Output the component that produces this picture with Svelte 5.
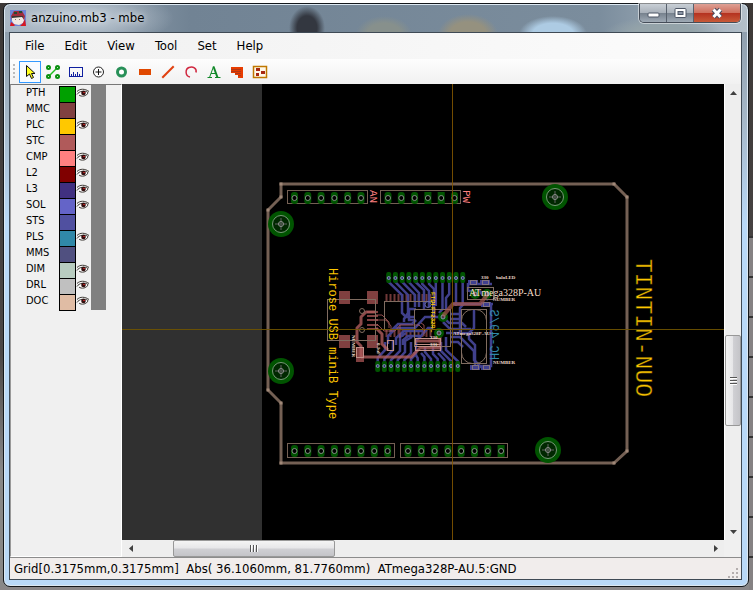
<script lang="ts">
	interface Layer {
		name: string;
		color: string;
		visible: boolean;
	}

	let layers = $state<Layer[]>([
		{ name: 'PTH', color: '#00a000', visible: true },
		{ name: 'MMC', color: '#804040', visible: false },
		{ name: 'PLC', color: '#ffc800', visible: true },
		{ name: 'STC', color: '#b05a5a', visible: false },
		{ name: 'CMP', color: '#ff8080', visible: true },
		{ name: 'L2', color: '#800000', visible: true },
		{ name: 'L3', color: '#403080', visible: true },
		{ name: 'SOL', color: '#6464c8', visible: true },
		{ name: 'STS', color: '#5050a0', visible: false },
		{ name: 'PLS', color: '#3088a8', visible: true },
		{ name: 'MMS', color: '#505080', visible: false },
		{ name: 'DIM', color: '#b8ccc0', visible: true },
		{ name: 'DRL', color: '#c0c0c0', visible: true },
		{ name: 'DOC', color: '#e0bca4', visible: true }
	]);

	const menus = ['File', 'Edit', 'View', 'Tool', 'Set', 'Help'];
	const tools = ['Select', 'Connect', 'Measure', 'Origin', 'Hole', 'Pad', 'Line', 'Arc', 'Text', 'Polygon', 'Component'];
	let activeTool = $state('Select');

	const status = 'Grid[0.3175mm,0.3175mm]  Abs( 36.1060mm, 81.7760mm)  ATmega328P-AU.5:GND';

	// board geometry
	const outline: [number, number][] = [
		[281, 184], [614, 184], [627, 197], [627, 451], [614, 463],
		[281, 463], [281, 403], [268, 390], [268, 210], [281, 197]
	];
	const holes = [[281, 224], [281, 371], [555, 197], [548, 450]];

	const row = (x: number, y: number, n: number, square: number[] = []) =>
		Array.from({ length: n }, (_, i) => ({ x: x + i * 13.3, y, square: square.includes(i) }));
	const pins = [
		...row(294.5, 198, 6),
		...row(388, 198, 6, [3, 4]),
		...row(294.5, 451, 8),
		...row(408, 451, 8, [7])
	];

	const topPads = Array.from({ length: 12 }, (_, i) => 388.7 + i * 6.73);
	const bottomPads = Array.from({ length: 13 }, (_, i) => 377.7 + i * 6.67);
	const chipPins = Array.from({ length: 12 }, (_, i) => 385.5 + i * 4);

	// solder side
	const blue = [
		'388.7,278 388.7,282 402,295 402,313 406,317 415,317',
		'395.4,278 395.4,282 408,295 408,313 404,319 404,322',
		'402.2,278 402.2,282 415,295 415,307',
		'408.9,278 408.9,282 419,293 419,307',
		'415.6,278 415.6,282 424,290 424,309',
		'422.3,278 422.3,284 429,291 429,307',
		'429.1,278 429.1,284 434,289 434,318',
		'435.8,278 435.8,306',
		'442.5,278 442.5,309 439,313',
		'449.2,278 449.2,294 446,298 446,310',
		'456,278 456,306',
		'462.7,278 462.7,305 460,308 460,333',
		'390,332 398,324 412,324 416,320',
		'388,344 388,336 396,328 415,328 425,317 441,317',
		'396,345 396,338 404,331 423,331',
		'403,345 403,340 408,336 421,336 428,328 432,328',
		'416,309 409,309 409,320 415,320',
		'443,317 449,323 462,323 466,327',
		'443,322 450,329 471,329',
		'446,333 472,333',
		'450,314 459,314',
		'450,319 459,319',
		'450,337 460,337 474,351 474,360 481,367 488,367',
		'450,342 458,342 463,347',
		'468,284 492,284',
		'468,283 468,292',
		'474,310 474,328 469,333 469,339 475,345 475,366',
		'491,304 491,366 481,366',
		'452,304 493,304',
		'469,291 479,291 488,300'
	];
	const fanOut = [
		'377.7,366 377.7,358 385,350 385,342',
		'384.4,366 384.4,359 393,350 393,340',
		'391,366 391,360 400,351 400,337 406,333',
		'397.7,366 397.7,360 405,352 405,341 412,337',
		'404.4,366 404.4,360 411,353 411,342',
		'411,366 411,359 416,354 416,340 421,337',
		'417.7,366 417.7,358 414,352',
		'424.4,366 424.4,357 421,353',
		'431,366 431,359 425,352 425,346',
		'437.7,366 437.7,359 433,354 433,347',
		'444.4,366 444.4,360 438,353',
		'451,366 451,361 441,351 441,342',
		'457.7,366 457.7,361 446,350 446,337'
	];

	// component side
	const red = [
		'376,312 366,312 361,317 361,324 357,328 357,342 361,346 361,358',
		'361,357 411,357 420,348 440,348 440,335',
		'376,328 382,334 382,344 388,350',
		'415,341 441,341'
	];
	const thinRed = [
		'376,315 382,315 389,322 389,328',
		'376,320 386,320 391,326 391,331',
		'377,324 384,331 395,331 400,325 419,325 425,331',
		'400,338 400,325',
		'424,336 424,325 421,323'
	];
</script>

<div class="desktop">
	<div class="window">
		<header class="titlebar">
			<svg class="app-icon" width="16" height="16" viewBox="0 0 16 16" aria-hidden="true">
				<rect width="16" height="16" fill="#6f86d8" />
				<path d="M1 6 4 1h8l3 5-1 4H2z" fill="#a02c3c" />
				<path d="M4 2h3v2H4zM9 1h3v2H9z" fill="#254a30" />
				<path d="M2 6h11v2H2z" fill="#3a3634" />
				<path d="m2 8 10-1 2 3-1 3-4 2-5-1-2-3z" fill="#f2e8e2" />
				<path d="M5 9h1v1H5zM9 9h1v1H9z" fill="#8c7070" />
				<path d="m1 12 4 3-1 1H0zM15 9l1 7h-6l3-3z" fill="#d81820" />
			</svg>
			<h1>anzuino.mb3 - mbe</h1>
			<div class="controls">
				<button aria-label="Minimize">
					<svg width="13" height="13"><rect x="1" y="6" width="11" height="4" rx="1" fill="#fff" stroke="#4d5666" /></svg>
				</button>
				<button aria-label="Maximize">
					<svg width="13" height="13">
						<rect x="1" y="1.500" width="11" height="9" rx="1" fill="#fff" stroke="#4d5666" />
						<rect x="4" y="4.500" width="5" height="3" fill="#8c96a6" stroke="#4d5666" />
					</svg>
				</button>
				<button class="close" aria-label="Close">
					<svg width="14" height="13">
						<path d="m3.500 2.500 7 7.500m0-7.500-7 7.500" stroke="#4b4d60" stroke-width="5" />
						<path d="m3.500 2.500 7 7.500m0-7.500-7 7.500" stroke="#fff" stroke-width="3" />
					</svg>
				</button>
			</div>
		</header>

		<div class="client">
			<nav class="menubar">
				{#each menus as menu}
					<button>{menu}</button>
				{/each}
			</nav>

			<div class="toolbar">
				<span class="grip"></span>
				{#each tools as tool}
					<button
						class:active={tool === activeTool}
						aria-label={tool}
						aria-pressed={tool === activeTool}
						onclick={() => (activeTool = tool)}
					>
						<svg width="16" height="16" viewBox="0 0 16 16">
							{#if tool === 'Select'}
								<path d="M4.500 1.500v11l3-2.500 2 4.500 2-1-2-4h3.500z" fill="#ffff20" stroke="#111" />
							{:else if tool === 'Connect'}
								<path d="M4 12 12 4" stroke="#20c020" stroke-width="1.500" />
								<g fill="#fff" stroke="#0a9010" stroke-width="2">
									<circle cx="3.500" cy="3.500" r="1.500" /><circle cx="12.500" cy="3.500" r="1.500" />
									<circle cx="3.500" cy="12.500" r="1.500" /><circle cx="12.500" cy="12.500" r="1.500" />
								</g>
							{:else if tool === 'Measure'}
								<path d="M1.500 3v10M14.500 3v10M1 3.500h14M1 12.500h14M3.500 10v2M5.500 8v4M7.500 10v2M9.500 8v4M11.500 10v2" stroke="#1020a0" fill="none" />
							{:else if tool === 'Origin'}
								<circle cx="7.500" cy="8" r="5" fill="#fff" stroke="#222" />
								<path d="M7.500 5v6M4.500 8h6" stroke="#111" />
							{:else if tool === 'Hole'}
								<circle cx="7.500" cy="8" r="4" fill="#fff" stroke="#289058" stroke-width="3" />
							{:else if tool === 'Pad'}
								<rect x="2" y="5" width="12" height="6" fill="#e04800" />
							{:else if tool === 'Line'}
								<path d="m3 13 10-10" stroke="#e04010" stroke-width="2" stroke-linecap="square" />
							{:else if tool === 'Arc'}
								<path d="M7 13C2 12 2 5 6 3.500c4-1.500 8 1 7 5" fill="none" stroke="#d02840" stroke-width="1.500" />
							{:else if tool === 'Text'}
								<path d="m3.500 13.500 4-11M5 9.500h6M1.500 13.500h4.500M9 13.500h5.500" fill="none" stroke="#108828" />
								<path d="m7.500 2.500 4 11" stroke="#108828" stroke-width="2" />
							{:else if tool === 'Polygon'}
								<path d="M2 3h12v11H9v-3H6V9H2z" fill="#e83c00" />
								<path d="M2 5.500h10M2 7.500h10M6 9.500h6M9 11.500h3" stroke="#b03818" />
							{:else}
								<rect x="1.500" y="2.500" width="13" height="11" fill="#fff8e8" stroke="#c07800" stroke-width="1.500" />
								<path d="M4 4h4v3H4zM4 9h3v3H4zM9 7h4v3H9z" fill="#a82810" />
							{/if}
						</svg>
					</button>
				{/each}
			</div>

			<main class="workspace">
				<aside class="layers">
					<ul>
						{#each layers as layer}
							<li>
								<span class="name">{layer.name}</span>
								<span class="swatch" style:background={layer.color}></span>
								<button
									class="eye"
									aria-label="Show {layer.name}"
									aria-pressed={layer.visible}
									onclick={() => (layer.visible = !layer.visible)}
								>
									{#if layer.visible}
										<svg width="14" height="10" viewBox="0 0 14 10">
											<path d="M1 3.500C4 .5 9 .5 13 3.500M1 6.500C3 3 9 2 12 4.500c-1 4-7 4.500-9 2.500" fill="#fff" stroke="#3a3632" />
											<circle cx="7.500" cy="5" r="2.300" fill="#300c0c" />
											<path d="M7 4h2v1H7z" fill="#b02020" />
										</svg>
									{/if}
								</button>
							</li>
						{/each}
					</ul>
				</aside>

				<div class="canvas">
					<svg width="100%" height="100%" role="img" aria-label="Board layout">
						<rect width="140" height="100%" fill="#303030" />
						<g transform="translate(-122 -84)">
							<!-- board outline -->
							<polygon points={outline.join(' ')} fill="none" stroke="#746054" stroke-width="3" />
							{#each outline as [x, y]}
								<rect x={x - 1.5} y={y - 1.5} width="3" height="3" fill="#a08878" />
							{/each}

							{#each holes as [x, y]}
								<g transform="translate({x} {y})" fill="none">
									<circle r="13" fill="#005400" />
									<circle r="8.500" fill="#002800" stroke="#789878" />
									<path d="M-6 0H6M0-6V6" stroke="#606060" />
									<circle r="2.500" stroke="#909090" />
								</g>
							{/each}

							<!-- headers -->
							<g fill="none" stroke="#746054">
								<rect x="287.500" y="190.500" width="80" height="13" />
								<rect x="380.500" y="190.500" width="80" height="13" />
								<rect x="287.500" y="443.500" width="107" height="14" />
								<rect x="400.500" y="443.500" width="107" height="14" />
							</g>
							{#each pins as pin}
								<rect x={pin.x - 3.5} y={pin.y - 6} width="7" height="12" rx={pin.square ? 0 : 3} fill="#005400" />
								<circle cx={pin.x} cy={pin.y} r="2.500" fill="#000" stroke="#809080" />
							{/each}

							<!-- usb connector and controller -->
							<g fill="#804040">
								<rect x="339" y="291" width="11" height="13" />
								<rect x="367" y="291" width="11" height="13" />
								<rect x="339" y="335" width="11" height="13" />
								<rect x="367" y="335" width="11" height="13" />
								<rect x="356" y="347" width="8" height="15" />
								{#each [311, 315, 319, 324, 328] as y}
									<rect x="367" {y} width="11" height="2" />
								{/each}
							</g>
							{#each chipPins as x}
								<rect {x} y="294" width="2" height="8" fill="#703838" />
								<rect {x} y="329" width="2" height="8" fill="#703838" />
							{/each}

							<g fill="none" stroke="#40408c" stroke-width="2.500">
								{#each [...blue, ...fanOut] as points}
									<polyline {points} />
								{/each}
							</g>
							<g fill="none" stroke="#b05c5c" stroke-opacity="0.8">
								{#each red as points}
									<polyline {points} stroke-width="3" stroke-linejoin="round" />
								{/each}
								{#each thinRed as points}
									<polyline {points} />
								{/each}
							</g>

							{#each topPads as x}
								<rect x={x - 2.5} y="272" width="5" height="11" rx="2" fill="#005400" />
								<circle cx={x} cy="278" r="1.500" fill="#303070" stroke="#8090b0" />
							{/each}
							{#each bottomPads as x}
								<rect x={x - 2.5} y="361" width="5" height="11" rx="2" fill="#005400" />
								<circle cx={x} cy="366" r="1.500" fill="#303070" stroke="#8090b0" />
							{/each}

							<g fill="none" stroke="#806c60">
								<rect x="327.500" y="299.500" width="48" height="41" />
								<rect x="384.500" y="301.500" width="48" height="28" />
								<rect x="414.500" y="309.500" width="36" height="37" />
								<rect x="461.500" y="309.500" width="25" height="54" />
								<rect x="461.500" y="309.500" width="25" height="54" rx="11" />
								<rect x="467.500" y="287.500" width="26" height="12" />
								<circle cx="362" cy="311" r="2.500" />
								<circle cx="362" cy="330" r="2.500" />
								<rect x="387.500" y="340.500" width="6" height="10" stroke="#c09088" />
								<rect x="356.500" y="347.500" width="7" height="10" stroke="#c09088" />
								<rect x="415.500" y="338.500" width="25" height="6" stroke="#c09088" />
								<rect x="415.500" y="346.500" width="25" height="4" stroke="#c09088" />
							</g>
							{#each [[471, 282], [483, 282], [484, 304], [484, 367], [473, 367]] as [x, y]}
								<rect x={x - 3} y={y - 2} width="10" height="5" fill="#404090" />
								<rect x={x - 0.5} y={y - 1.5} width="6" height="4" fill="none" stroke="#807080" />
							{/each}
							{#each [[443, 317], [439, 333], [475, 294], [487, 294]] as [x, y]}
								<circle cx={x} cy={y} r="5" fill="#005400" />
								<circle cx={x} cy={y} r="2" fill="#583848" stroke="#8098a8" />
							{/each}
							<polyline points="443,316 453,304 480,304 487,295" fill="none" stroke="#a85850" stroke-width="4" stroke-opacity="0.7" />
							<circle cx="428" cy="304.500" r="3" fill="none" stroke="#6868b0" />

							<!-- silk texts -->
							<g class="silk">
								<text class="large" transform="translate(636 259) rotate(90)">TINTIN-NUO</text>
								<text class="medium" transform="translate(329 268) rotate(90)">Hirose USB miniB Type</text>
								<text class="tiny" transform="translate(431 292) rotate(90)">FTDI FT232RL</text>
							</g>
							<text class="ref" transform="translate(370 190) rotate(90)">AN</text>
							<text class="ref" transform="translate(463 190) rotate(90)">PW</text>
							<!-- solder side print is mirrored -->
							<text class="crystal" transform="translate(490 360) rotate(-90) scale(1 -1)">HC-49/S</text>
							<g class="values">
								<text x="481" y="279">330</text>
								<text x="496" y="279">baloLED</text>
								<text x="493" y="301">NUMBER</text>
								<text x="493" y="364">NUMBER</text>
								<text x="453" y="335">ATmega328P-AU</text>
								<text x="430" y="339">330</text>
								<text x="430" y="346">330</text>
								<text transform="translate(352 335) rotate(90)">NUMBER</text>
								<text transform="translate(377 343) rotate(90)">0.1uF</text>
							</g>
							<text class="part" x="469" y="296">ATmega328P-AU</text>
						</g>

						<!-- cursor cross -->
						<rect x="330" width="1" height="100%" fill="#805400" fill-opacity="0.9" />
						<rect y="245" width="100%" height="1" fill="#705400" fill-opacity="0.9" />
					</svg>
				</div>

				<div class="scrollbar vertical">
					<button aria-label="Scroll up"><svg width="7" height="4"><path d="M0 4 3.500 0 7 4z" fill="#404040" /></svg></button>
					<span class="before"></span>
					<span class="thumb"><i></i></span>
					<span class="after"></span>
					<button aria-label="Scroll down"><svg width="7" height="4"><path d="M0 0h7L3.500 4z" fill="#404040" /></svg></button>
				</div>
				<div class="scrollbar horizontal">
					<button aria-label="Scroll left"><svg width="4" height="7"><path d="M4 0v7L0 3.500z" fill="#404040" /></svg></button>
					<span class="before"></span>
					<span class="thumb"><i></i></span>
					<span class="after"></span>
					<button aria-label="Scroll right"><svg width="4" height="7"><path d="M0 0v7l4-3.500z" fill="#404040" /></svg></button>
				</div>
			</main>

			<footer class="statusbar">
				<span>{status}</span>
				<svg width="12" height="12" aria-hidden="true">
					<path d="M9 1h2v2H9zM5 5h2v2H5zM9 5h2v2H9zM1 9h2v2H1zM5 9h2v2H5zM9 9h2v2H9z" fill="#b4aeae" />
				</svg>
			</footer>
		</div>
	</div>
</div>

<style>
	:global(body) {
		margin: 0;
	}

	.desktop {
		box-sizing: border-box;
		display: flex;
		height: 100vh;
		padding: 3px 4px 3px 3px;
		background:
			linear-gradient(#fff, #fff) 0 0 / 100% 3px no-repeat,
			repeating-linear-gradient(#333 0 2px, #858283 2px 40px) 100% 100% / 4px 60% no-repeat,
			linear-gradient(#8a8788, #8a8788) 0 100% / 100% 3px no-repeat,
			linear-gradient(#3c3836, #4b4747 60%, #888 80%);
		font-family: 'DejaVu Sans Condensed', 'Noto Sans', sans-serif;
		font-size: 13px;
		color: #000;
	}

	button {
		margin: 0;
		padding: 0;
		border: 0;
		background: none;
		font: inherit;
		color: inherit;
	}

	svg {
		display: block;
	}

	.window {
		display: flex;
		flex: 1;
		flex-direction: column;
		min-width: 0;
		padding: 0 6px 6px 5px;
		border: 1px solid #14181c;
		border-radius: 7px;
		box-shadow: inset 0 0 0 1px #dce8f2;
		background:
			radial-gradient(ellipse 90px 28px at 80px 14px, #c6d0da, transparent) no-repeat,
			radial-gradient(ellipse 18px 22px at 303px 24px, #333740 55%, transparent) 0 0 / 100% 28px no-repeat,
			radial-gradient(ellipse 28px 18px at 380px 30px, #87908c 60%, transparent) 0 0 / 100% 28px no-repeat,
			radial-gradient(ellipse 30px 20px at 464px 30px, #95917f 60%, transparent) 0 0 / 100% 28px no-repeat,
			radial-gradient(ellipse 34px 18px at 549px 30px, #adcbe3 60%, transparent) 0 0 / 100% 28px no-repeat,
			radial-gradient(ellipse 60px 18px at 660px 30px, #94a3a9 50%, transparent) 0 0 / 100% 28px no-repeat,
			linear-gradient(90deg, #a7b5c2, #718394 25%, #7b8d9d 80%, #b4c0ca) 0 0 / 100% 28px no-repeat,
			linear-gradient(#8998a6, #a6b8c8 20%, #b9d9f8 38%, #b9d9f8);
	}

	.titlebar {
		display: flex;
		flex: none;
		height: 28px;
	}

	.app-icon {
		margin: 6px 5px 0 1px;
	}

	h1 {
		flex: 1;
		margin: 0;
		font-size: 13px;
		font-weight: 400;
		line-height: 27px;
		text-shadow: 0 0 6px #fff;
	}

	.controls {
		display: flex;
		height: 18px;
		margin-right: 1px;
		border: 1px solid #454d58;
		border-top: 0;
		border-radius: 0 0 5px 5px;
		box-shadow: 0 0 0 1px #ffffff80;
		overflow: hidden;
	}

	.controls button {
		display: grid;
		width: 27px;
		place-items: center;
		border-right: 1px solid #58616d;
		background: linear-gradient(#c9cfd6, #a9b1ba 48%, #77828e 52%, #9faab5);
	}

	.controls .close {
		width: 46px;
		border: 0;
		background: linear-gradient(#dea095, #cf705e 48%, #b53220 52%, #c85a38);
	}

	.client {
		display: flex;
		flex: 1;
		flex-direction: column;
		min-height: 0;
		border: 1px solid #3f4a55;
		background: #f0f0f0;
	}

	.menubar {
		display: flex;
		flex: none;
		gap: 20px;
		height: 26px;
		padding: 0 15px;
		background: linear-gradient(90deg, #f0f0f0, #fcfcfc);
	}

	.menubar button {
		line-height: 26px;
	}

	.toolbar {
		display: flex;
		flex: none;
		align-items: center;
		gap: 1px;
		height: 25px;
		padding-left: 3px;
		background: linear-gradient(#fdfdfd, #f1f1f1);
	}

	.grip {
		width: 2px;
		height: 15px;
		margin-right: 3px;
		background: repeating-linear-gradient(#bbb 0 2px, transparent 2px 4px);
	}

	.toolbar button {
		box-sizing: border-box;
		display: grid;
		width: 22px;
		height: 22px;
		place-items: center;
		border: 1px solid transparent;
	}

	.toolbar .active {
		border-color: #3399ff;
		background: #f8fbff;
	}

	.workspace {
		display: grid;
		flex: 1;
		grid-template-rows: minmax(0, 1fr) 17px;
		grid-template-columns: 112px minmax(0, 1fr) 17px;
		min-height: 0;
	}

	.layers {
		box-sizing: border-box;
		grid-row: 1 / 3;
		border: 1px solid #fff;
		border-top-color: #777;
		border-left-color: #999;
	}

	.layers ul {
		width: 80px;
		margin: 0;
		padding: 1px 0 0;
		border-right: 15px solid #808080;
		list-style: none;
	}

	.layers li {
		display: flex;
		height: 16px;
		padding-left: 15px;
	}

	.name {
		width: 33px;
		font-size: 11px;
		line-height: 14px;
	}

	.swatch {
		width: 15px;
		height: 15px;
		border: 1px solid #000;
	}

	.eye {
		display: flex;
		align-items: flex-start;
		width: 15px;
		padding-top: 2px;
	}

	.canvas {
		overflow: hidden;
		background: #000;
	}

	.silk {
		fill: #ffc800;
	}

	.large,
	.medium,
	.ref,
	.crystal {
		font-family: 'Liberation Mono', monospace;
	}

	.large {
		font-size: 23px;
		stroke: #000;
		stroke-opacity: 0.5;
	}

	.medium {
		font-size: 12px;
	}

	.tiny {
		font-family: 'Liberation Sans', sans-serif;
		font-size: 6px;
		font-weight: 700;
	}

	.ref {
		font-size: 11px;
		fill: #ff8080;
	}

	.crystal {
		font-size: 12px;
		fill: #3088a8;
	}

	.values {
		font-family: 'Liberation Serif', serif;
		font-size: 5px;
		font-weight: 700;
		fill: #f0d8c8;
	}

	.part {
		font-family: 'Liberation Serif', serif;
		font-size: 10px;
		fill: #f4dcc8;
	}

	.scrollbar {
		display: flex;
		background: #eee;
	}

	.vertical {
		flex-direction: column;
		border-left: 1px solid #fff;
	}

	.horizontal {
		grid-column: 2 / 3;
	}

	.scrollbar button {
		display: grid;
		flex: 0 0 17px;
		place-items: center;
	}

	.thumb {
		display: grid;
		place-items: center;
		border: 1px solid #989898;
		border-radius: 2px;
		background: linear-gradient(90deg, #f4f4f4, #e6e6e8 48%, #d0d0d4 52%, #c4c4c8);
	}

	.horizontal .thumb {
		background: linear-gradient(#f4f4f4, #e6e6e8 48%, #d0d0d4 52%, #c4c4c8);
	}

	.vertical .before {
		flex: 235;
	}

	.vertical .thumb {
		flex: 90;
	}

	.vertical .after {
		flex: 97;
	}

	.horizontal .before {
		flex: 34;
	}

	.horizontal .thumb {
		flex: 161;
	}

	.horizontal .after {
		flex: 373;
	}

	.thumb i {
		width: 7px;
		height: 8px;
		background: repeating-linear-gradient(#555 0 1px, #fff 1px 2px, transparent 2px 3px);
	}

	.horizontal .thumb i {
		width: 8px;
		height: 7px;
		background: repeating-linear-gradient(90deg, #555 0 1px, #fff 1px 2px, transparent 2px 3px);
	}

	.statusbar {
		display: flex;
		flex: none;
		align-items: flex-end;
		justify-content: space-between;
		height: 21px;
		padding: 0 2px 0 4px;
		border-top: 1px solid #8c8c8c;
		background: #f1edec;
		line-height: 21px;
		white-space: pre;
	}
</style>
